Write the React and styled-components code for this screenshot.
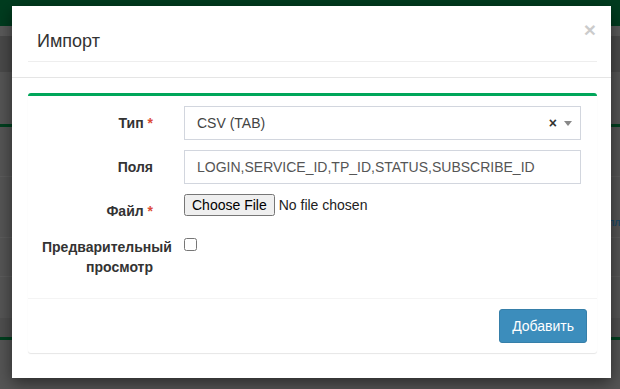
import React from "react";
import styled, { createGlobalStyle } from "styled-components";

//Base page styles
const GlobalStyle = createGlobalStyle`
  html, body {
    margin: 0;
    padding: 0;
  }
  body {
    background: #555555;
    font-family: "Liberation Sans", Arial, sans-serif;
    font-size: 14px;
    color: #333;
  }
`;

//Dimmed page behind the dialog
const stripes = [
  { h: 26, bg: "#003c1f" },
  { h: 10, bg: "#5a5a5a" },
  { h: 36, bg: "#4a4a4a" },
  { h: 52, bg: "#555555" },
  { h: 3, bg: "#00401f" },
  { h: 50, bg: "#555555", line: "#5c5c5c" },
  { h: 61, bg: "#555555", line: "#5c5c5c", text: "пл" },
  { h: 39, bg: "#555555", line: "#5c5c5c" },
  { h: 41, bg: "#555555" },
  { h: 19, bg: "#4f4f4f" },
  { h: 3, bg: "#00401f" },
  { h: 49, bg: "#555555" },
];

const ImportDialog = () => {
  return (
    <>
      <GlobalStyle />
      <Page>
        {stripes.map((s, i) => (
          <Strip key={i} $h={s.h} $bg={s.bg} $line={s.line}>
            {s.text && <BackLink>{s.text}</BackLink>}
          </Strip>
        ))}

        <Modal>
          <Header>
            <Title>Импорт</Title>
            <Close type="button">×</Close>
          </Header>
          <Divider />

          <Box>
            <Body>
              <Row $mb={10}>
                <Label>
                  Тип <Required>*</Required>
                </Label>
                <Select>
                  <span>CSV (TAB)</span>
                  <SelectTools>
                    <Clear>×</Clear>
                    <Arrow />
                  </SelectTools>
                </Select>
              </Row>
              <Row $mb={10}>
                <Label>Поля</Label>
                <TextInput
                  type="text"
                  defaultValue="LOGIN,SERVICE_ID,TP_ID,STATUS,SUBSCRIBE_ID"
                />
              </Row>
              <Row $mb={9}>
                <Label>
                  Файл <Required>*</Required>
                </Label>
                <FileCell>
                  <FileInput type="file" />
                </FileCell>
              </Row>
              <Row $mb={0}>
                <Label>Предварительный просмотр</Label>
                <div>
                  <Check type="checkbox" />
                </div>
              </Row>
            </Body>
            <Footer>
              <PrimaryButton type="button">Добавить</PrimaryButton>
            </Footer>
          </Box>
        </Modal>
      </Page>
    </>
  );
};

const Page = styled.div`
  position: relative;
  width: 620px;
  height: 389px;
  overflow: hidden;
  display: flex;
  flex-direction: column;
`;

const Strip = styled.div`
  flex: none;
  display: flex;
  justify-content: flex-end;
  height: ${(p) => p.$h}px;
  box-sizing: border-box;
  background: ${(p) => p.$bg};
  border-bottom: ${(p) => (p.$line ? `1px solid ${p.$line}` : "none")};
  overflow: hidden;
`;

const BackLink = styled.span`
  margin-top: 41px;
  padding-right: 0;
  font-weight: bold;
  font-size: 10px;
  line-height: 10px;
  letter-spacing: -0.5px;
  color: #1d4864;
`;

const Modal = styled.div`
  position: absolute;
  left: 12px;
  top: 6px;
  width: 599px;
  height: 372px;
  background: #fff;
  box-shadow: 0 5px 15px rgba(0, 0, 0, 0.5);
`;

const Header = styled.div`
  display: flex;
  justify-content: space-between;
  align-items: flex-start;
  height: 56px;
  box-sizing: border-box;
  margin: 0 14px 0 16px;
  padding: 25px 1px 0 9px;
  border-bottom: 1px solid #eeeeee;
`;

const Title = styled.h4`
  margin: 0;
  font-size: 18px;
  font-weight: normal;
  line-height: 20px;
  color: #333;
`;

const Close = styled.button`
  margin-top: -12px;
  padding: 0;
  border: 0;
  background: none;
  font-family: "Liberation Sans", Arial, sans-serif;
  font-size: 21px;
  font-weight: bold;
  line-height: 1;
  color: #000;
  opacity: 0.2;
  cursor: pointer;
`;

const Divider = styled.div`
  margin-top: 15px;
  border-top: 1px solid #e5e5e5;
`;

const Box = styled.div`
  margin: 15px 14px 0 16px;
  border-top: 3px solid #00a65a;
  border-radius: 3px;
  background: #fff;
  box-shadow: 0 1px 1px rgba(0, 0, 0, 0.1);
`;

const Body = styled.div`
  padding: 10px 16px 21px 14px;
`;

const Row = styled.div`
  display: grid;
  grid-template-columns: 111px 1fr;
  column-gap: 31px;
  margin-bottom: ${(p) => p.$mb}px;
`;

const Label = styled.label`
  padding-top: 7px;
  font-weight: bold;
  line-height: 20px;
  text-align: right;
  color: #333;
`;

const Required = styled.span`
  color: #dd4b39;
`;

const Select = styled.div`
  display: flex;
  align-items: center;
  justify-content: space-between;
  height: 34px;
  box-sizing: border-box;
  padding: 6px 8px 6px 12px;
  border: 1px solid #d2d6de;
  color: #444;
  font-size: 14px;
`;

const SelectTools = styled.div`
  display: flex;
  align-items: center;
  gap: 7px;
`;

const Clear = styled.span`
  font-weight: bold;
  font-size: 14px;
  line-height: 1;
  color: #333;
`;

const Arrow = styled.span`
  width: 0;
  height: 0;
  border-style: solid;
  border-width: 5px 4px 0 4px;
  border-color: #888 transparent transparent transparent;
`;

const TextInput = styled.input`
  height: 34px;
  box-sizing: border-box;
  margin: 0;
  padding: 6px 12px;
  border: 1px solid #d2d6de;
  border-radius: 0;
  font-family: "Liberation Sans", Arial, sans-serif;
  font-size: 14px;
  color: #555;
  outline: none;
`;

const FileCell = styled.div`
  display: flex;
  align-items: flex-start;
`;

const FileInput = styled.input`
  margin: 0;
  font-family: "Liberation Sans", Arial, sans-serif;
  font-size: 14px;
  color: #222;
`;

const Check = styled.input`
  margin: 8px 0 0 0;
  width: 13px;
  height: 13px;
`;

const Footer = styled.div`
  display: flex;
  justify-content: flex-end;
  padding: 10px;
  border-top: 1px solid #f4f4f4;
`;

const PrimaryButton = styled.button`
  height: 34px;
  padding: 6px 12px;
  border: 1px solid #367fa9;
  border-radius: 3px;
  background: #3c8dbc;
  color: #fff;
  font-family: "Liberation Sans", Arial, sans-serif;
  font-size: 14px;
  line-height: 20px;
  cursor: pointer;
`;

export default ImportDialog;
